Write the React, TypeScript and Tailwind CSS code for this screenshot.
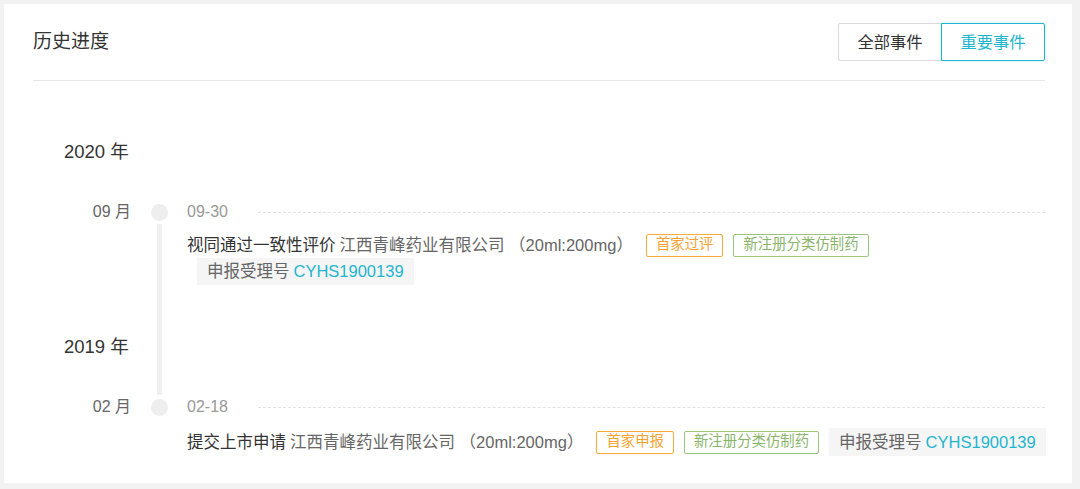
import React from "react";

const FONT = { fontFamily: '"Liberation Sans", Arial, "Noto Sans CJK SC", sans-serif' };

function Row({
  left,
  mid,
  children,
  className = "",
}: {
  left?: React.ReactNode;
  mid: "dot" | "line" | "none";
  children?: React.ReactNode;
  className?: string;
}) {
  return (
    <div className={`flex ${className}`}>
      <div className="w-[98px] shrink-0 flex items-center">{left}</div>
      <div className="ml-[20px] w-[17px] shrink-0 flex justify-center items-center">
        {mid === "dot" && <div className="w-[17px] h-[17px] rounded-full bg-[#eeeeee]" />}
        {mid === "line" && <div className="w-[5px] self-stretch bg-[#f0f0f0]" />}
      </div>
      <div className="ml-[19px] flex-1 min-w-0">{children}</div>
    </div>
  );
}

function Year({ text }: { text: string }) {
  return <span className="pl-[31px] text-[18.5px] text-[#333333] whitespace-nowrap">{text}</span>;
}

function Month({ text }: { text: string }) {
  return <span className="w-full text-right text-[16px] text-[#666666] whitespace-nowrap">{text}</span>;
}

function DateLine({ date }: { date: string }) {
  return (
    <div className="flex items-center h-full">
      <span className="text-[16px] text-[#999999]">{date}</span>
      <div className="ml-[30px] flex-1 border-t border-dashed border-[#e2e2e2]" />
    </div>
  );
}

function Tag({ text, tone, className = "ml-[10px]" }: { text: string; tone: "orange" | "green"; className?: string }) {
  const cls =
    tone === "orange"
      ? "border-[#f8ab37] text-[#f7a230]"
      : "border-[#9cc47e] text-[#8cb56c]";
  return (
    <span
      className={`h-[23px] px-[9px] border rounded-[2px] text-[14.4px] flex items-center whitespace-nowrap ${cls} ${className}`}
    >
      {text}
    </span>
  );
}

function NumBox({ className = "" }: { className?: string }) {
  return (
    <span
      className={`bg-[#f5f5f5] px-[10px] text-[16.5px] flex items-center whitespace-nowrap ${className}`}
    >
      <span className="text-[#666666]">申报受理号</span>
      <span className="ml-[4px] text-[#1fb5d0]">CYHS1900139</span>
    </span>
  );
}

export default function App() {
  return (
    <div className="min-h-screen bg-[#f2f2f2] pt-[4px] pl-[4px] pr-[8px] pb-[5px]" style={FONT}>
      <div className="bg-white pl-[29px] pr-[27px] pb-[27px]">
        {/* Header */}
        <div className="h-[77px] flex items-center justify-between border-b border-[#e8e8e8]">
          <h2 className="text-[19px] text-[#333333]">历史进度</h2>
          <div className="flex">
            <button className="h-[38px] w-[104px] border border-[#d9d9d9] rounded-l-[2px] text-[16.3px] text-[#333333] bg-white">
              全部事件
            </button>
            <button className="h-[38px] w-[104px] -ml-px border border-[#1fb5d0] rounded-r-[2px] text-[16.3px] text-[#1fb5d0] bg-white shadow-[0_0_3px_rgba(31,181,208,0.25)]">
              重要事件
            </button>
          </div>
        </div>

        {/* Timeline */}
        <div className="pt-[51px]">
          <Row mid="none" className="h-[40px]" left={<Year text="2020 年" />} />
          <div className="h-[28px]" />
          <Row mid="dot" className="h-[24px]" left={<Month text="09 月" />}>
            <DateLine date="09-30" />
          </Row>
          <Row mid="line">
            <div className="pt-[9px]">
              <div className="h-[24px] flex items-center">
                <span className="text-[16.5px] text-[#333333] whitespace-nowrap">视同通过一致性评价</span>
                <span className="ml-[4px] text-[16.5px] text-[#666666] whitespace-nowrap">
                  江西青峰药业有限公司 （20ml:200mg）
                </span>
                <Tag text="首家过评" tone="orange" className="ml-[13px]" />
                <Tag text="新注册分类仿制药" tone="green" />
              </div>
              <div className="mt-[1px] flex">
                <NumBox className="ml-[10px] h-[27px]" />
              </div>
            </div>
          </Row>
          <Row mid="line" className="h-[42px]" />
          <Row mid="line" className="h-[40px]" left={<Year text="2019 年" />} />
          <Row mid="line" className="h-[28px]" />
          <Row mid="dot" className="h-[24px]" left={<Month text="02 月" />}>
            <DateLine date="02-18" />
          </Row>
          <Row mid="none">
            <div className="pt-[9px]">
              <div className="h-[28px] flex items-center">
                <span className="text-[16.5px] text-[#333333] whitespace-nowrap">提交上市申请</span>
                <span className="ml-[4px] text-[16.5px] text-[#666666] whitespace-nowrap">
                  江西青峰药业有限公司 （20ml:200mg）
                </span>
                <Tag text="首家申报" tone="orange" className="ml-[13px]" />
                <Tag text="新注册分类仿制药" tone="green" />
                <NumBox className="ml-[10px] h-[28px]" />
              </div>
            </div>
          </Row>
        </div>
      </div>
    </div>
  );
}
